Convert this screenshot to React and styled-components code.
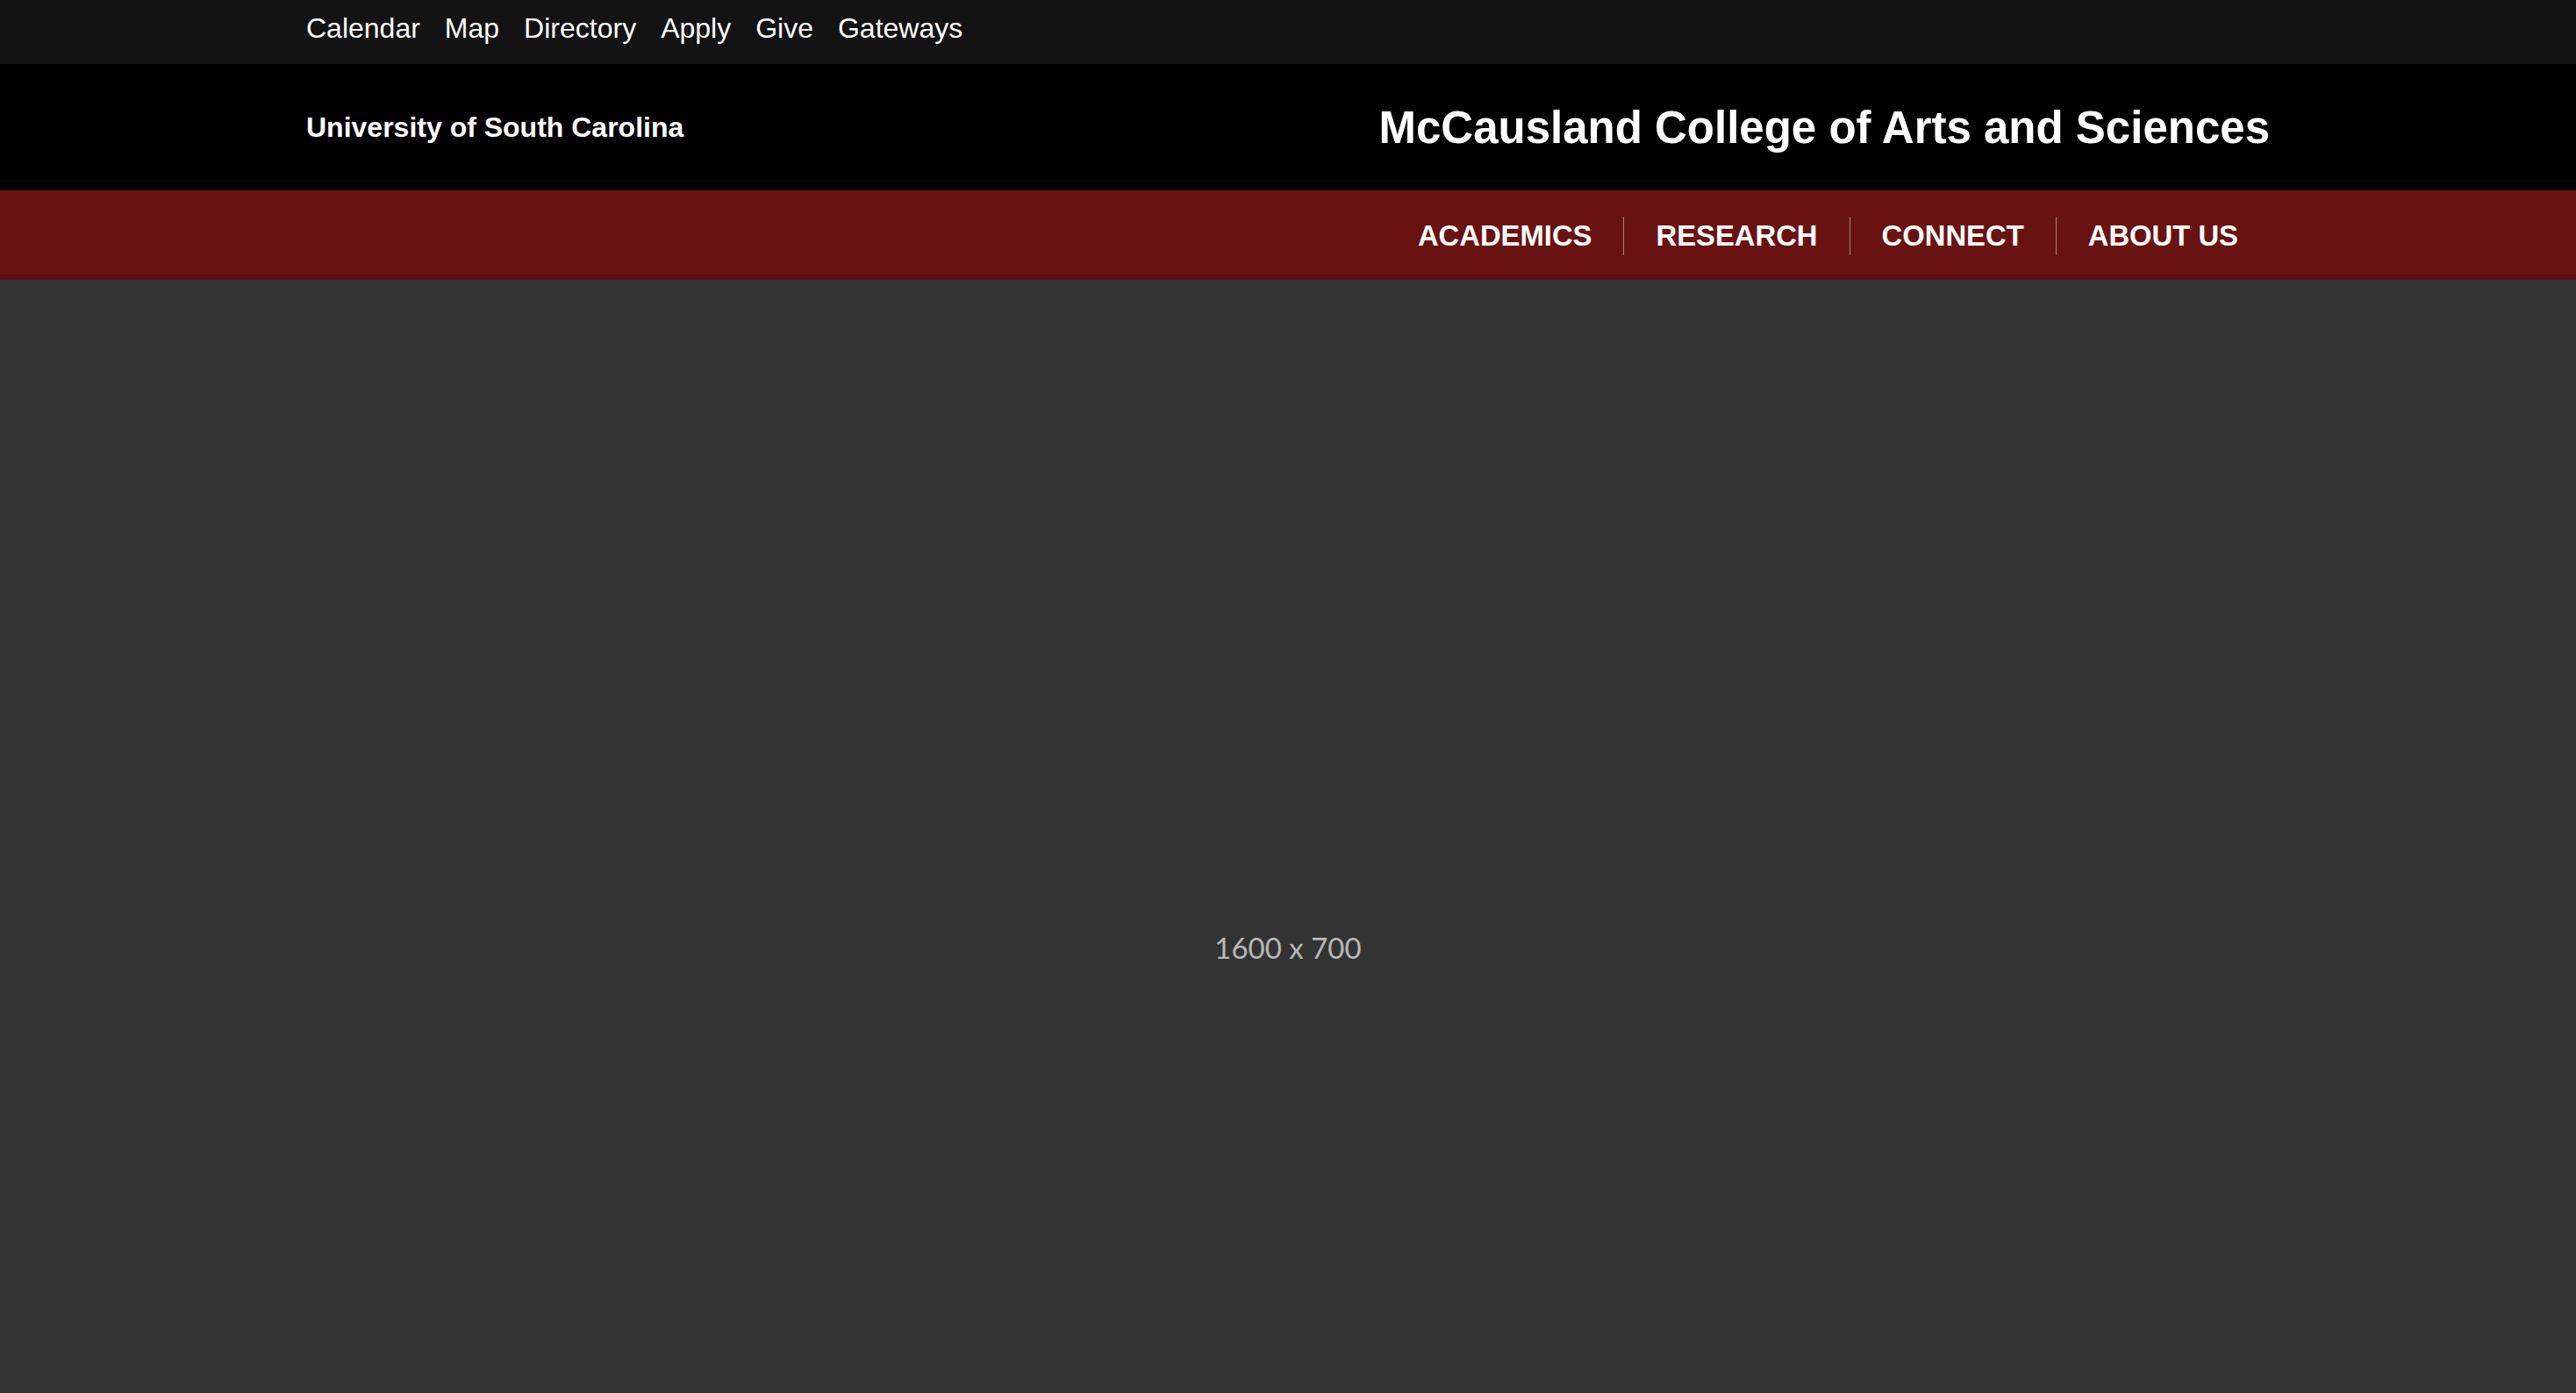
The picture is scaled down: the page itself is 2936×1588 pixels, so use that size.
import React from "react";
import styled, { createGlobalStyle } from "styled-components";

const GlobalStyle = createGlobalStyle`
  html, body {
    margin: 0;
    padding: 0;
    background-color: #333333;
  }
  * {
    box-sizing: border-box;
  }
`;

const Page = styled.div`
  font-family: "Liberation Sans", Arial, Helvetica, sans-serif;
  color: #ffffff;
`;

const Container = styled.div`
  width: 2238px;
  margin: 0 auto;
`;

const UtilityBar = styled.div`
  background-color: #131313;
  height: 73px;
`;

const UtilityList = styled(Container)`
  display: flex;
  gap: 28px;
  padding-top: 16px;
`;

const UtilityLink = styled.a`
  color: #ffffff;
  font-size: 32px;
  line-height: 1;
  text-decoration: none;
`;

const Header = styled.header`
  background-color: #000000;
  height: 144px;
`;

const HeaderInner = styled(Container)`
  height: 100%;
  display: flex;
  align-items: center;
  justify-content: space-between;
`;

const UniversityName = styled.div`
  font-size: 32px;
  font-weight: bold;
  line-height: 1;
`;

const CollegeTitle = styled.h1`
  margin: 0;
  font-size: 51px;
  font-weight: bold;
  line-height: 1;
`;

const NavBar = styled.nav`
  background-color: #691212;
  border-bottom: 6px solid #570d12;
  height: 102px;
  padding-top: 8px;
`;

const NavInner = styled(Container)`
  height: 88px;
  display: flex;
  align-items: center;
  justify-content: flex-end;
`;

const NavItem = styled.a`
  display: flex;
  align-items: center;
  height: 44px;
  padding: 0 36px;
  font-size: 32.8px;
  font-weight: bold;
  line-height: 1;
  color: #ffffff;
  text-decoration: none;
  text-transform: uppercase;
  border-left: ${(p) => (p.$first ? "none" : "1px solid rgba(255, 255, 255, 0.45)")};
`;

const Hero = styled.section`
  background-color: #333333;
  height: 1522px;
  display: flex;
  align-items: center;
  justify-content: center;
`;

const PlaceholderText = styled.span`
  font-family: Lato, "Open Sans", sans-serif;
  font-size: 33px;
  color: #b8b8b8;
`;

const utilityLinks = ["Calendar", "Map", "Directory", "Apply", "Give", "Gateways"];
const navLinks = ["Academics", "Research", "Connect", "About Us"];

function App() {
  return (
    <Page>
      <GlobalStyle />
      <UtilityBar>
        <UtilityList>
          {utilityLinks.map((label) => (
            <UtilityLink key={label} href="#">
              {label}
            </UtilityLink>
          ))}
        </UtilityList>
      </UtilityBar>
      <Header>
        <HeaderInner>
          <UniversityName>University of South Carolina</UniversityName>
          <CollegeTitle>McCausland College of Arts and Sciences</CollegeTitle>
        </HeaderInner>
      </Header>
      <NavBar>
        <NavInner>
          {navLinks.map((label, i) => (
            <NavItem key={label} href="#" $first={i === 0}>
              {label}
            </NavItem>
          ))}
        </NavInner>
      </NavBar>
      <Hero>
        <PlaceholderText>1600 x 700</PlaceholderText>
      </Hero>
    </Page>
  );
}

export default App;
